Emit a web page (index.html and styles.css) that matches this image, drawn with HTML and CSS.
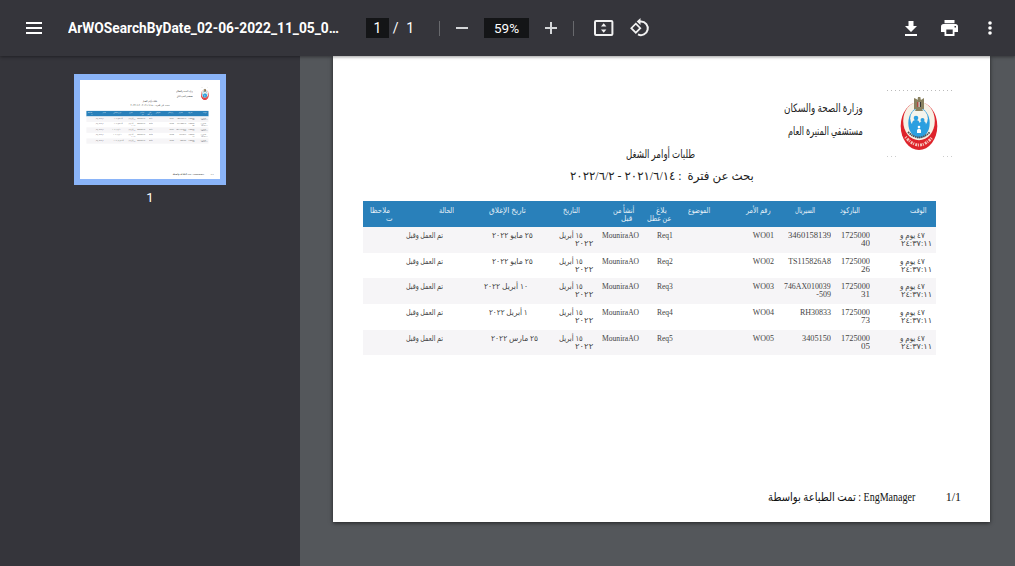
FILE: index.html
```html
<!DOCTYPE html>
<html lang="en">
<head>
<meta charset="utf-8">
<title>ArWOSearchByDate</title>
<link rel="stylesheet" href="styles.css">
</head>
<body>
<div class="viewer">
  <header class="toolbar">
    <svg class="menu" width="16" height="12" viewBox="0 0 16 12"><path d="M0 0h16v2H0zM0 5h16v2H0zM0 10h16v2H0z" fill="#fff"/></svg>
    <div class="name"><span data-w="271">ArWOSearchByDate_02-06-2022_11_05_0…</span></div>
    <div class="pageno"><span class="field">1</span><span>/</span><span>1</span></div>
    <i class="sep s1"></i>
    <svg class="minus" width="12" height="12" viewBox="0 0 12 12"><path d="M0 5h12v2H0z" fill="#d5d7d9"/></svg>
    <span class="zoom">59%</span>
    <svg class="plus" width="12" height="12" viewBox="0 0 12 12"><path d="M0 5h12v2H0zM5 0h2v12H5z" fill="#d5d7d9"/></svg>
    <i class="sep s2"></i>
    <svg class="fit" width="20" height="16" viewBox="0 0 20 16"><rect x="1" y="1" width="17.400" height="14" rx="1" fill="none" stroke="#f1f1f1" stroke-width="2"/><path d="M7 6.500h5.400L9.700 3.200zM7 9.500h5.400L9.700 12.800z" fill="#f1f1f1"/></svg>
    <svg class="rotate" width="20" height="20" viewBox="0 0 20 20"><path d="M5.800 5.700L10.300 10.200 5.800 14.700 1.300 10.200z" fill="none" stroke="#f1f1f1" stroke-width="1.700"/><path d="M8.500 3.500h2.500a6.800 6.800 0 1 1-3 12.900" fill="none" stroke="#f1f1f1" stroke-width="2"/><path d="M10.500 0v7L6.700 3.500z" fill="#f1f1f1"/></svg>
    <div class="actions">
      <svg width="12" height="15" viewBox="0 0 12 15"><path d="M3.500 0h5v5H12L6 11 0 5h3.500zM0 13h12v2H0z" fill="#fff"/></svg>
      <svg width="17" height="16" viewBox="0 0 17 16"><path d="M3.500 0h10v3.200h-10zM2.700 4h11.600A2.700 2.700 0 0 1 17 6.700V12h-3.500v4h-10v-4H0V6.700A2.700 2.700 0 0 1 2.700 4zM5.300 9.500V14h6.400V9.500zM13.500 6v1.500H15V6z" fill="#fff" fill-rule="evenodd"/></svg>
      <svg width="4" height="14" viewBox="0 0 4 14"><circle cx="2" cy="2" r="1.800" fill="#fff"/><circle cx="2" cy="7" r="1.800" fill="#fff"/><circle cx="2" cy="12" r="1.800" fill="#fff"/></svg>
    </div>
  </header>
  <div class="body">
    <aside class="sidebar">
      <div class="thumb"><div class="thumb-paper" id="thumb"></div></div>
      <div class="thumb-no">1</div>
    </aside>
    <main class="canvas">
      <section class="page" id="page" dir="rtl">
        <div class="head">
          <div class="logo-box">
            <svg class="logo" width="38" height="56" viewBox="0 0 38 56">
              <ellipse cx="19" cy="30" rx="18.300" ry="24" fill="#de232b"/>
              <ellipse cx="19" cy="25" rx="15.800" ry="19.300" fill="#f7f1e5"/>
              <ellipse cx="19" cy="27" rx="10.700" ry="15" fill="#2b9fe0"/>
              <ellipse cx="19" cy="22.500" rx="8.800" ry="10" fill="#f5f4ec"/>
              <circle cx="16" cy="22" r="2.300" fill="#2b9fe0"/><circle cx="22.500" cy="24" r="2" fill="#2b9fe0"/>
              <path d="M12 36v-8q0-4 4-4 3 0 3.600 3 1-2 3.200-2 3.200 0 3.200 4v7z" fill="#2b9fe0"/>
              <circle cx="19" cy="31" r="1.300" fill="#fff"/><path d="M17 37v-3q2-3 4 0v3z" fill="#fff"/>
              <path d="M14 2q3 1 3.500 2L18 1h2.300l.6 3L24 2v11h-2l1 2h-8l1-2h-2z" fill="#89815f"/>
              <path d="M17.300 6h1.300v5h-1.300z" fill="#b33"/><path d="M18.600 6h1.200v5h-1.200z" fill="#eee"/><path d="M19.800 6h1.200v5h-1.200z" fill="#333"/>
              <path d="M8 36q11 11 22 0" fill="none" stroke="#4b5057" stroke-width="1.800" stroke-dasharray="1.500 .6"/>
              <path d="M5.500 41q13.500 16 27 0" fill="none" stroke="#f5c5bd" stroke-width="3" stroke-dasharray="1 1.200 2 .8"/>
            </svg>
          </div>
          <div class="org"><div><span data-w="79">وزارة الصحة والسكان</span></div><div><span data-w="75">مستشفي المنيرة العام</span></div></div>
        </div>
        <div class="title t1"><span data-w="69">طلبات أوامر الشغل</span></div>
        <div class="title t2"><span data-w="184">بحث عن فترة &nbsp;: ٢٠٢١/٦/١٤ - ٢٠٢٢/٦/٢</span></div>
        <div class="table" id="table"></div>
        <div class="foot"><div class="num"><span data-w="15">1/1</span></div><div class="by"><span data-w="147">EngManager : تمت الطباعة بواسطة</span></div></div>
      </section>
    </main>
  </div>
</div>
<script src="table.js"></script>
</body>
</html>
```
FILE: styles.css
```css
* { box-sizing: border-box; }
body { margin: 0; overflow: hidden; font-family: Roboto, sans-serif; }
.viewer { width: 1015px; height: 566px; display: flex; flex-direction: column; }
.toolbar { height: 56px; flex: none; background: #35353b; color: #fff; display: flex; align-items: center; padding: 0 23px 0 26px; box-shadow: 0 1px 3px #0006; position: relative; z-index: 2; }
.toolbar svg { flex: none; }
.name { width: 272px; margin-left: 26px; font-size: 14px; font-weight: 700; white-space: nowrap; }
.name span { display: inline-block; transform-origin: left; }
.pageno { display: flex; align-items: center; margin-left: 26px; font-size: 14px; width: 48px; }
.field { width: 24px; height: 20px; line-height: 20px; text-align: center; background: #141517; margin-right: 4px; }
.pageno span:nth-child(2) { width: 14px; }
.sep { width: 1px; height: 15px; background: #68696d; flex: none; }
.s1 { margin-left: 25px; }
.minus { margin-left: 16px; }
.zoom { width: 45px; height: 20px; line-height: 20px; margin-left: 16px; background: #141517; text-align: center; font-size: 13.5px; }
.plus { margin-left: 16px; }
.s2 { margin-left: 16px; }
.fit { margin-left: 20px; }
.rotate { margin-left: 16px; }
.actions { margin-left: auto; display: flex; align-items: center; gap: 25px; }
.actions svg:first-child { margin-right: -1px; }
.actions svg:last-child { margin-left: 5px; }
.body { flex: 1; display: flex; }
.sidebar { width: 300px; background: #35353b; display: flex; flex-direction: column; align-items: center; padding-top: 18px; }
.thumb { width: 152px; height: 111px; border: 6px solid #8ab4f8; background: #fff; overflow: hidden; }
.thumb-paper { width: 657px; height: 465px; transform: scale(.2131); transform-origin: 0 0; }
.thumb-no { font-size: 13px; line-height: 18px; color: #fff; margin-top: 4px; }
.canvas { flex: 1; background: #54575b; padding: 0 25px 0 33px; }
.page { width: 657px; height: 466px; background: #fff; color: #222; font-family: "Liberation Serif", "DejaVu Sans", serif; box-shadow: 0 1px 4px #0009; display: flex; flex-direction: column; white-space: nowrap; }
.thumb .page { box-shadow: none; }
.page [data-w] { display: inline-block; transform-origin: right; }
.head { display: flex; height: 87px; padding: 34px 38px 0 0; flex: none; }
.logo-box {
  width: 65px; height: 68px; padding: 6px 14px 0 0; flex: none;
  background:
    repeating-linear-gradient(90deg, #bbb 0 1px, transparent 1px 4px) 0 0 / 65px 1px no-repeat,
    repeating-linear-gradient(90deg, #ccc 0 1px, transparent 1px 4px) 0 66px / 12px 1px no-repeat,
    repeating-linear-gradient(90deg, #ccc 0 1px, transparent 1px 4px) 56px 66px / 9px 1px no-repeat;
}
.logo { display: block; }
.org { padding: 7px 24px 0 0; font-size: 11.5px; line-height: 23px; }
.title { font-size: 12px; height: 22px; line-height: 22px; flex: none; }
.t1 { padding-right: 295px; font-size: 11.5px; }
.t2 { padding-right: 236px; }
.table { width: 573px; margin: 14px 54px 0 0; flex: none; font-size: 8px; line-height: 9px; }
.row { display: grid; grid-template-columns: 62px 39px 57px 64px 37px 34px 46px 53px 97px 47px 37px; height: 25.7px; padding-top: 4px; color: #444; }
.row:nth-child(even) { background: #f6f5f7; }
.row.header { background: #2980ba; height: 26px; color: #e6f0f8; padding-top: 5px; }
.cell { min-width: 0; }
.line { height: 8px; }
.foot { margin-top: auto; height: 32px; padding-right: 29px; display: flex; font-size: 12px; line-height: 15px; color: #111; }
.num { width: 46px; }
```
FILE: table.js
```js
// Each line is [text, distance from the right edge of its column, drawn width].
const header = [
  [['الوقت', 10, 16]], [['الباركود', 14, 20]], [['السيريال', 20, 20]], [['رقم الأمر', 8, 25]],
  [['الموضوع', 4, 22]], [['بلاغ', 10, 11], ['عن عطل', 6, 24]], [['أنشأ من', 9, 21], ['قبل', 11, 11]],
  [['التاريخ', 17, 17]], [['تاريخ الإغلاق', 18, 37]], [['الحالة', -7, 15]], [['ملاحظا', 10, 20], ['ت', 7, 7]]
];
const data = [
  ['40', ['3460158139', 43], 'WO01', 'Req1', ['٢٥ مايو ٢٠٢٢', 11, 41]],
  ['26', ['TS115826A8', 43], 'WO02', 'Req2', ['٢٥ مايو ٢٠٢٢', 11, 41]],
  ['31', ['746AX010039', 47], 'WO03', 'Req3', ['١٠ أبريل ٢٠٢٢', 16, 44]],
  ['73', ['RH30833', 31], 'WO04', 'Req4', ['١ أبريل ٢٠٢٢', 16, 39]],
  ['05', ['3405150', 29], 'WO05', 'Req5', ['٢٥ مارس ٢٠٢٢', 6, 47]]
];
const rows = data.map((d, i) => [
  [['٤٧ يوم و', 11, 25], ['٢٤:٣٧:١١', 4, 31]],
  [['1725000', 4, 29], [d[0], 4, 9]],
  i === 2 ? [[d[1][0], 4, d[1][1]], ['509-', 4, 15]] : [[d[1][0], 4, d[1][1]]],
  [[d[2], 4, 21]],
  [],
  [[d[3], 4, 16]],
  [['MouniraAO', 4, 37]],
  [['١٥ أبريل', 14, 24], ['٢٠٢٢', 4, 18]],
  [d[4]],
  [['تم العمل وقبل', 4, 37]],
  []
]);
function addRow(cells, cls) {
  const row = document.createElement('div');
  row.className = cls;
  cells.forEach(lines => {
    const cell = document.createElement('div');
    cell.className = 'cell';
    lines.forEach(([text, pad, width]) => {
      const line = document.createElement('div');
      line.className = 'line';
      line.style.marginRight = pad + 'px';
      const span = document.createElement('span');
      span.dataset.w = width;
      span.textContent = text;
      line.append(span);
      cell.append(line);
    });
    row.append(cell);
  });
  document.getElementById('table').append(row);
}
addRow(header, 'row header');
rows.forEach(r => addRow(r, 'row'));
document.querySelectorAll('[data-w]').forEach(s => {
  s.style.transform = 'scaleX(' + s.dataset.w / s.offsetWidth + ')';
});
const copy = document.getElementById('page').cloneNode(true);
copy.removeAttribute('id');
document.getElementById('thumb').append(copy);
```
